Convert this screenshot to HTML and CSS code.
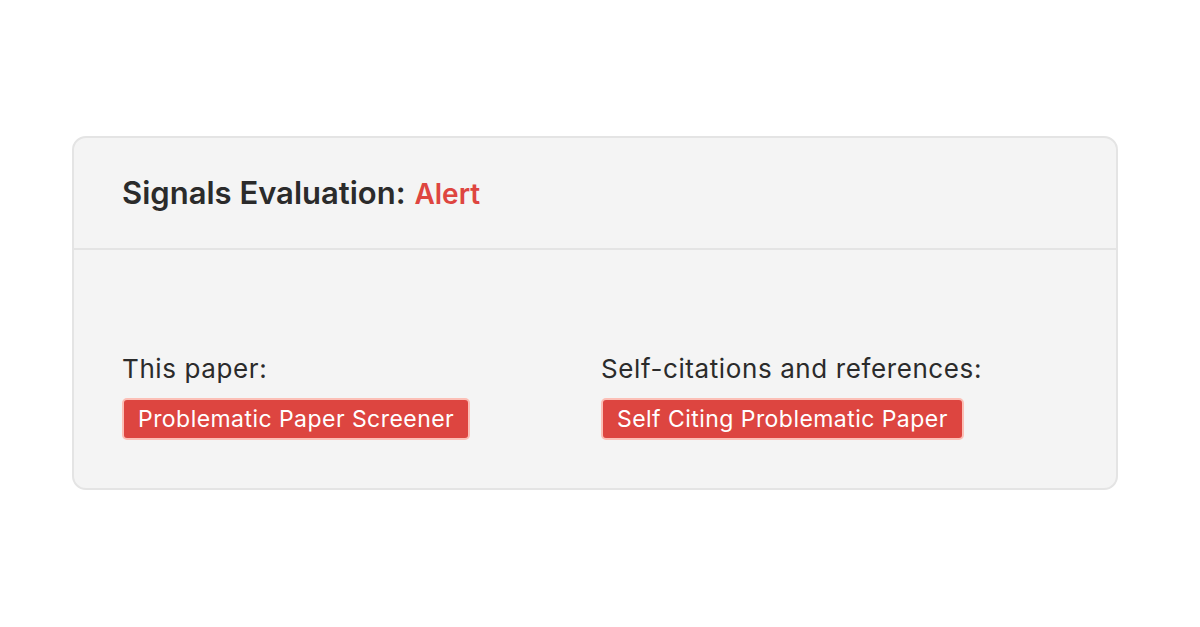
FILE: index.html
```html
<!DOCTYPE html>
<html>
<head>
<meta charset="utf-8">
<link rel="stylesheet" href="styles.css">
</head>
<body>
<div class="page">
  <div class="card">
    <div class="card-header">
      <h1 class="title">Signals Evaluation: <span class="alert">Alert</span></h1>
    </div>
    <div class="card-body">
      <div class="col">
        <div class="label">This paper:</div>
        <div class="badges"><span class="badge">Problematic Paper Screener</span></div>
      </div>
      <div class="col">
        <div class="label">Self-citations and references:</div>
        <div class="badges"><span class="badge">Self Citing Problematic Paper</span></div>
      </div>
    </div>
  </div>
</div>
</body>
</html>
```
FILE: styles.css
```css
html, body {
  margin: 0;
  padding: 0;
  background: #ffffff;
}
body {
  font-family: Inter, "Noto Sans", sans-serif;
  color: #2b2b2b;
}
.page {
  width: 1200px;
  height: 627px;
  padding-top: 136px;
  padding-left: 72px;
  box-sizing: border-box;
}
.card {
  width: 1046px;
  height: 354px;
  box-sizing: border-box;
  background: #f4f4f4;
  border: 2px solid #e4e4e4;
  border-radius: 14px;
  display: flex;
  flex-direction: column;
}
.card-header {
  height: 112px;
  box-sizing: border-box;
  border-bottom: 2px solid #e4e4e4;
  display: flex;
  align-items: center;
  padding-left: 48px;
}
.title {
  margin: 0;
  font-size: 31px;
  font-weight: 600;
  line-height: 40px;
  color: #2b2b2b;
  letter-spacing: 0;
}
.alert {
  font-size: 28px;
  font-weight: 600;
  color: #de4540;
  margin-left: 1px;
}
.card-body {
  flex: 1;
  display: grid;
  grid-template-columns: 479px 1fr;
  align-content: end;
  padding: 0 48px 48px 48px;
}
.label {
  font-size: 26px;
  font-weight: 400;
  line-height: 32px;
  letter-spacing: 0.6px;
  margin-bottom: 13px;
}
.badges {
  display: flex;
}
.badge {
  display: inline-block;
  background: #dd4540;
  color: #ffffff;
  border: 2px solid #fcbfb6;
  border-radius: 5px;
  font-size: 23px;
  letter-spacing: 0.45px;
  line-height: 38px;
  height: 42px;
  box-sizing: border-box;
  padding: 0 14px;
}
```
